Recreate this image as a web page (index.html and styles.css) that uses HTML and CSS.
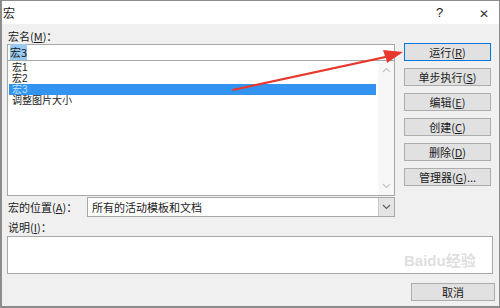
FILE: index.html
```html
<!DOCTYPE html>
<html lang="zh-CN">
<head>
    <meta charset="UTF-8">
    <meta name="viewport" content="width=device-width, initial-scale=1.0">
    <title>宏</title>
    <link rel="stylesheet" href="styles.css">
</head>
<body>
    <div class="dialog">
        <div class="titlebar">
            <span class="title">宏</span>
            <span class="help">?</span>
            <span class="close">&#x2715;</span>
        </div>

        <div class="content">
            <div class="top">
                <div class="left-col">
                    <div class="label first">宏名(<u>M</u>)：</div>
                    <div class="name-input"><span class="sel">宏3</span></div>
                    <div class="listbox">
                        <ul class="items">
                            <li>宏1</li>
                            <li>宏2</li>
                            <li class="active">宏3</li>
                            <li>调整图片大小</li>
                        </ul>
                        <div class="scrollbar">
                            <svg width="9" height="6" viewBox="0 0 9 6"><polyline points="1,5 4.5,1.5 8,5" fill="none" stroke="#c4c4c4" stroke-width="1.2"/></svg>
                            <svg width="9" height="6" viewBox="0 0 9 6"><polyline points="1,1 4.5,4.5 8,1" fill="none" stroke="#c4c4c4" stroke-width="1.2"/></svg>
                        </div>
                    </div>
                </div>

                <div class="buttons">
                    <button class="btn default">运行(<u>R</u>)</button>
                    <button class="btn">单步执行(<u>S</u>)</button>
                    <button class="btn">编辑(<u>E</u>)</button>
                    <button class="btn">创建(<u>C</u>)</button>
                    <button class="btn">删除(<u>D</u>)</button>
                    <button class="btn">管理器(<u>G</u>)...</button>
                </div>
            </div>

            <div class="location-row">
                <span class="label">宏的位置(<u>A</u>)：</span>
                <div class="combo">
                    <span class="combo-text">所有的活动模板和文档</span>
                    <span class="combo-btn">
                        <svg width="9" height="6" viewBox="0 0 9 6"><polyline points="1,1 4.5,4.5 8,1" fill="none" stroke="#606060" stroke-width="1.2"/></svg>
                    </span>
                </div>
            </div>

            <div class="label desc-label">说明(<u>I</u>)：</div>
            <div class="desc-box"></div>

            <div class="footer">
                <button class="btn cancel">取消</button>
            </div>
        </div>

        <svg class="arrow" width="500" height="308" viewBox="0 0 500 308">
            <polygon points="232,89 385,56 383,50 403,52 387,63 386,58 233,91" fill="#e8372c"/>
        </svg>

        <div class="watermark">Baidu经验</div>
    </div>
</body>
</html>
```

FILE: styles.css
```css
body {
    margin: 0;
    padding: 0;
    background-color: #f0f0f0;
    font-family: "Noto Sans CJK SC", "Noto Sans", sans-serif;
    font-size: 11px;
    color: #1a1a1a;
}
.dialog {
    position: relative;
    width: 500px;
    height: 308px;
    box-sizing: border-box;
    background-color: #f0f0f0;
    border: 1px solid #8c8c8c;
    border-left-width: 2px;
    border-bottom-width: 2px;
    overflow: hidden;
}
.titlebar {
    height: 23px;
    background-color: #fff;
    display: flex;
    align-items: center;
    font-size: 12px;
}
.title {
    margin-left: 1px;
    flex: 1;
}
.help {
    width: 20px;
    font-family: "Liberation Sans", sans-serif;
    font-size: 13px;
    margin-right: 23px;
}
.close {
    width: 20px;
    font-size: 12px;
    color: #333;
}
.content {
    padding: 0 0 0 5px;
}
.top {
    display: flex;
}
.left-col {
    width: 388px;
}
.label {
    line-height: 14px;
    height: 14px;
}
.label.first {
    padding-top: 5px;
    padding-left: 1px;
    height: 15px;
}
u {
    text-decoration: underline;
    text-underline-offset: 1px;
}
.name-input {
    height: 15px;
    border: 1px solid #a8a8a8;
    background-color: #fff;
    padding-left: 2px;
    line-height: 15px;
}
.sel {
    background-color: #99c9ef;
    color: #1a1a1a;
}
.listbox {
    height: 134px;
    border: 1px solid #a8a8a8;
    border-top: none;
    background-color: #fff;
    display: flex;
}
.items {
    list-style: none;
    margin: 0;
    padding: 1px 0 0 1px;
    flex: 1;
}
.items li {
    height: 11px;
    font-family: "Liberation Sans", "Noto Sans CJK SC", sans-serif;
    font-size: 10px;
    line-height: 11px;
    padding-left: 3px;
}
.items li.active {
    background-color: #3294f0;
    color: #bfe0ff;
}
.scrollbar {
    width: 16px;
    margin-left: 2px;
    background-color: #f7f7f7;
    display: flex;
    flex-direction: column;
    justify-content: space-between;
    align-items: center;
    padding: 6px 0;
    box-sizing: border-box;
}
.buttons {
    margin-left: 9px;
    width: 87px;
    padding-top: 19px;
    display: flex;
    flex-direction: column;
    gap: 7px;
}
.btn {
    height: 18px;
    padding: 0;
    background-color: #e1e1e1;
    border: 1px solid #adadad;
    font-family: "Noto Sans CJK SC", "Noto Sans", sans-serif;
    font-size: 11px;
    line-height: 15px;
    color: #1a1a1a;
}
.btn.default {
    border-color: #0078d7;
}
.location-row {
    display: flex;
    align-items: center;
    width: 388px;
    margin-top: 1px;
}
.location-row .label {
    width: 79px;
    padding-left: 1px;
}
.combo {
    flex: 1;
    height: 18px;
    border: 1px solid #a8a8a8;
    background-color: #fff;
    display: flex;
    align-items: center;
}
.combo-text {
    flex: 1;
    padding-left: 4px;
}
.combo-btn {
    width: 15px;
    height: 18px;
    background-color: #e5e5e5;
    border-left: 1px solid #c8c8c8;
    display: flex;
    align-items: center;
    justify-content: center;
}
.desc-label {
    margin-top: 3px;
    padding-left: 1px;
}
.desc-box {
    width: 484px;
    height: 36px;
    margin-top: 2px;
    border: 1px solid #a8a8a8;
    background-color: #fff;
}
.footer {
    display: flex;
    justify-content: flex-end;
    width: 488px;
    margin-top: 9px;
}
.btn.cancel {
    width: 84px;
}
.arrow {
    position: absolute;
    left: -2px;
    top: -1px;
    pointer-events: none;
}
.watermark {
    position: absolute;
    left: 402px;
    top: 252px;
    font-family: "Liberation Sans", "Noto Sans CJK SC", sans-serif;
    font-size: 15px;
    line-height: 16px;
    font-weight: bold;
    color: rgba(200, 200, 200, 0.6);
    pointer-events: none;
}
```
